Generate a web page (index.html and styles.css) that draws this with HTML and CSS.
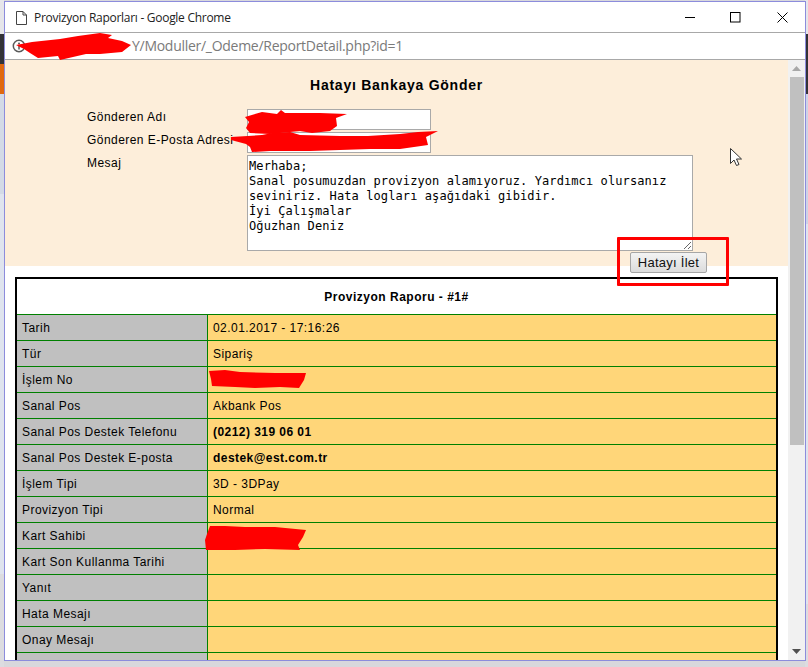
FILE: index.html
```html
<!DOCTYPE html>
<html lang="tr">
<head>
<meta charset="utf-8">
<title>Provizyon Raporları - Google Chrome</title>
<link rel="stylesheet" href="styles.css">
</head>
<body>
<div class="desktop">
  <div class="strip strip-left">
    <div class="seg seg-top"></div>
    <div class="seg seg-dark"></div>
    <div class="seg seg-orange"></div>
    <div class="seg seg-pale"></div>
    <div class="seg seg-blue"></div>
    <div class="seg seg-light"></div>
  </div>
  <div class="strip strip-right">
    <div class="seg seg-top"></div>
    <div class="seg seg-darker"></div>
    <div class="seg seg-pale2"></div>
    <div class="seg seg-blue"></div>
    <div class="seg seg-light"></div>
  </div>

  <div class="window">
    <header class="titlebar">
      <svg class="doc-icon" width="11" height="14" viewBox="0 0 11 14"><path d="M.5.5h6.500l3.500 3.500v9.500h-10zM7 .5v3.500h3.500" fill="#fff" stroke="#444"/></svg>
      <span class="title">Provizyon Raporları - Google Chrome</span>
      <div class="controls">
        <svg class="ctl ctl-min" width="10" height="11" viewBox="0 0 10 11"><path d="M0 5.500h10" stroke="#000"/></svg>
        <svg class="ctl ctl-max" width="11" height="11" viewBox="0 0 11 11"><rect x=".5" y=".5" width="9.500" height="9.500" fill="none" stroke="#000"/></svg>
        <svg class="ctl ctl-close" width="11" height="11" viewBox="0 0 11 11"><path d="M.5.5l10 10M10.500.5l-10 10" stroke="#000" fill="none"/></svg>
      </div>
    </header>
    <div class="addressbar">
      <svg class="info-icon" width="14" height="14" viewBox="0 0 14 14"><circle cx="7" cy="7" r="5.700" fill="none" stroke="#5a5a5a" stroke-width="1.500"/><circle cx="7" cy="4.500" r="1" fill="#5a5a5a"/><path d="M7 6.500v4" stroke="#5a5a5a" stroke-width="1.500"/></svg>
      <span class="url">Y/Moduller/_Odeme/ReportDetail.php?id=1</span>
    </div>
    <div class="viewport">
      <main class="page">
        <section class="panel">
          <h3 class="panel-title">Hatayı Bankaya Gönder</h3>
          <form class="form">
            <label class="lbl">Gönderen Adı</label>
            <input class="field" type="text">
            <label class="lbl">Gönderen E-Posta Adresi</label>
            <input class="field" type="text">
            <label class="lbl">Mesaj</label>
            <textarea class="msg" spellcheck="false">Merhaba;
Sanal posumuzdan provizyon alamıyoruz. Yardımcı olursanız
seviniriz. Hata logları aşağıdaki gibidir.
İyi Çalışmalar
Oğuzhan Deniz</textarea>
            <div class="actions"><button class="send" type="button">Hatayı İlet</button></div>
          </form>
        </section>
        <table class="report">
          <colgroup><col class="col-k"><col class="col-v"></colgroup>
          <tr><th class="report-title" colspan="2">Provizyon Raporu - #1#</th></tr>
          <tr><td class="k">Tarih</td><td class="v">02.01.2017 - 17:16:26</td></tr>
          <tr><td class="k">Tür</td><td class="v">Sipariş</td></tr>
          <tr><td class="k">İşlem No</td><td class="v"></td></tr>
          <tr><td class="k">Sanal Pos</td><td class="v">Akbank Pos</td></tr>
          <tr><td class="k">Sanal Pos Destek Telefonu</td><td class="v strong">(0212) 319 06 01</td></tr>
          <tr><td class="k">Sanal Pos Destek E-posta</td><td class="v strong">destek@est.com.tr</td></tr>
          <tr><td class="k">İşlem Tipi</td><td class="v">3D - 3DPay</td></tr>
          <tr><td class="k">Provizyon Tipi</td><td class="v">Normal</td></tr>
          <tr><td class="k">Kart Sahibi</td><td class="v"></td></tr>
          <tr><td class="k">Kart Son Kullanma Tarihi</td><td class="v"></td></tr>
          <tr><td class="k">Yanıt</td><td class="v"></td></tr>
          <tr><td class="k">Hata Mesajı</td><td class="v"></td></tr>
          <tr><td class="k">Onay Mesajı</td><td class="v"></td></tr>
          <tr><td class="k"></td><td class="v"></td></tr>
        </table>
      </main>
      <aside class="scrollbar">
        <div class="sb-btn"><svg width="9" height="5" viewBox="0 0 9 5"><path d="M4.500 0l4.500 5h-9z" fill="#a8a8a8"/></svg></div>
        <div class="sb-track"><div class="sb-thumb"></div></div>
        <div class="sb-btn sb-btn-down"><svg width="9" height="5" viewBox="0 0 9 5"><path d="M0 0h9l-4.500 5z" fill="#505050"/></svg></div>
      </aside>
    </div>
  </div>

  <svg class="marks" width="808" height="667" viewBox="0 0 808 667">
    <g fill="#f00">
      <path d="M16 45 32 42 60 39 78 36 100 33 112 35 108 38 122 41 131 45 122 52 100 54 86 54 60 60 58 56 38 58 30 53 24 49z"/>
      <path d="M245 117 262 112 277 114 281 110 285 113 320 113 347 114 336 118 337 126 330 131 312 133 300 131 270 134 250 133 246 128 249 122z"/>
      <path d="M231 137 262 135 272 133 290 132 300 135 340 136 368 136 400 134 418 132 438 131 426 137 428 145 400 149 370 149 340 150 310 151 270 151 252 152 250 147 246 144 231 140z"/>
      <path d="M209 371 225 370 240 372 275 373 306 373 304 380 299 388 280 387 255 388 235 387 212 386 211 379z"/>
      <path d="M210 526 225 526 245 527 275 527 306 530 303 537 298 545 300 550 265 549 235 550 206 550 205 540 207 534z"/>
    </g>
  </svg>
  <div class="highlight"></div>
  <svg class="cursor" width="13" height="19" viewBox="0 0 13 19"><path d="M.5.5v15l3.500-3.500 2.500 5.500 2.500-1-2.500-5.500h5z" fill="#fff" stroke="#333"/></svg>
</div>
</body>
</html>
```

FILE: styles.css
```css
* { box-sizing: border-box; }
html, body { margin: 0; padding: 0; height: 100%; overflow: hidden; }
body { font-family: "Liberation Sans", Arial, sans-serif; color: #000; }

.desktop { position: relative; width: 808px; height: 667px; overflow: hidden; background: #d8d8dc; }

.strip { position: absolute; top: 0; bottom: 0; display: flex; flex-direction: column; }
.strip-left { left: 0; width: 4px; }
.strip-right { right: 0; width: 3px; }
.seg-top { height: 34px; background: #e6e6ea; }
.seg-dark { height: 30px; background: #333338; }
.seg-orange { height: 30px; background: #e0680f; }
.seg-darker { height: 60px; background: #333338; }
.seg-pale { height: 100px; background: #d3dae6; }
.seg-pale2 { height: 130px; background: #cdd3e6; }
.seg-blue { height: 380px; background: #dfe4ee; }
.seg-light { flex: 1; background: #dcdce0; }

.window {
  position: absolute; left: 4px; top: 1px; width: 802px; height: 660px;
  display: flex; flex-direction: column;
  background: #fff; border: 1px solid #8c8cdc;
}

.titlebar { height: 31px; flex: none; display: flex; align-items: center; padding-left: 11px; background: #fff; border-bottom: 1px solid #a8a8a8; }
.doc-icon { flex: none; margin-top: 1px; }
.title { margin-left: 7px; font: 12px "Open Sans", sans-serif; letter-spacing: -.28px; color: #222; }
.controls { margin-left: auto; display: flex; align-items: center; padding-right: 17px; }
.ctl { display: block; }
.ctl-min { margin-right: 35px; }
.ctl-max { margin-right: 36px; }

.addressbar { height: 27px; flex: none; display: flex; align-items: center; padding: 0 0 1px 7px; background: #fff; border-bottom: 1px solid #a8a8a8; }
.info-icon { flex: none; margin-top: 1px; }
.url { margin-left: 106px; font: 14px "Open Sans", sans-serif; letter-spacing: -.28px; color: #7a7a7a; white-space: nowrap; }

.viewport { flex: 1; min-height: 0; display: flex; overflow: hidden; }
.page { flex: 1; min-width: 0; overflow: hidden; background: #fff; }

.panel { height: 206px; background: #fdeeda; padding-top: 17px; }
.panel-title { margin: 0; text-align: center; font-size: 14px; line-height: 16px; font-weight: bold; letter-spacing: .75px; }

.form { display: grid; grid-template-columns: 160px auto; justify-content: start; row-gap: 2px; margin: 16px 0 0 82px; }
.lbl { padding-top: 1px; font-size: 12px; line-height: 15px; letter-spacing: .45px; white-space: nowrap; }
.field { display: block; width: 184px; height: 21px; margin: 0; padding: 1px 2px; background: #fff; border: 1px solid #a9a9a9; }
.msg {
  display: block; width: 446px; height: 96px; margin: 0; padding: 3px 1px 1px; resize: both; overflow: hidden;
  background: #fff; border: 1px solid #a9a9a9; color: #000;
  font: 12px/15px "DejaVu Sans Mono", monospace; letter-spacing: .1px; white-space: pre;
}
.actions { grid-column: 2; display: flex; justify-content: flex-end; margin-top: -1px; }
.send {
  width: 77px; height: 21px; padding: 0; margin-right: -14px;
  background: linear-gradient(#f3f3f3, #dcdcdc); border: 1px solid #a6a6a6; border-radius: 2px;
  font: 13px "Liberation Sans", sans-serif; letter-spacing: .25px; color: #111;
}

.report { width: 763px; margin: 11px 0 0 10px; border-collapse: separate; border-spacing: 0; table-layout: fixed; border: 2px solid #000; border-bottom: 0; font-size: 12px; }
.col-k { width: 191px; }
.report td, .report th { padding: 0 0 0 5px; border-bottom: 1px solid #008000; text-align: left; font-weight: normal; letter-spacing: .45px; white-space: nowrap; }
.report .report-title { height: 36px; text-align: center; font-weight: bold; background: #fff; padding: 0; letter-spacing: .5px; }
.k { height: 26px; background: #c0c0c0; border-right: 1px solid #008000; }
.v { height: 26px; background: #ffd679; }
.report .strong { font-weight: bold; }

.scrollbar { width: 17px; flex: none; display: flex; flex-direction: column; background: #f1f1f1; }
.sb-btn { height: 17px; flex: none; display: flex; align-items: center; justify-content: center; }
.sb-track { flex: 1; min-height: 0; padding: 0 1px 0 2px; }
.sb-thumb { height: 368px; background: #c0c0c0; }

.marks { position: absolute; left: 0; top: 0; pointer-events: none; }
.highlight { position: absolute; left: 617px; top: 237px; width: 112px; height: 49px; border: 3px solid #f00; border-radius: 1px; }
.cursor { position: absolute; left: 730px; top: 148px; }
```
